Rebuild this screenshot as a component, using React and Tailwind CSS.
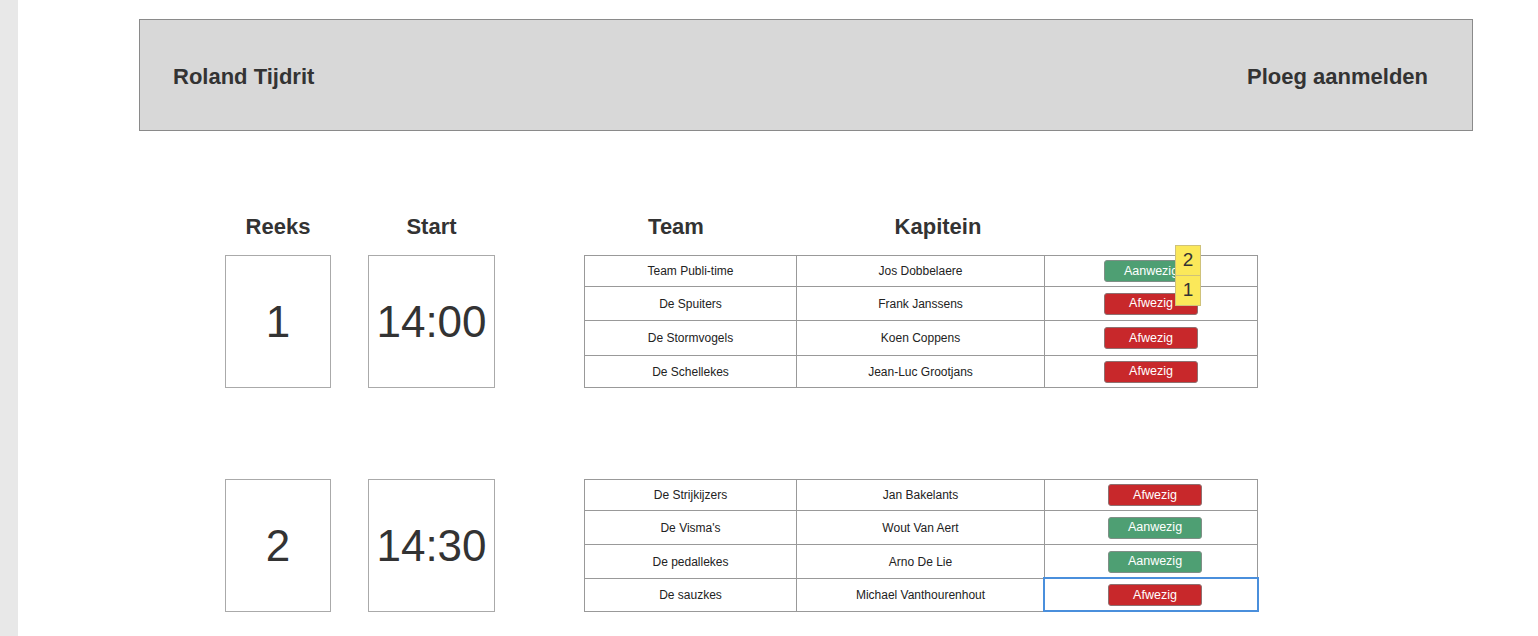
import React from 'react'

const groups = [
  {
    reeks: '1',
    start: '14:00',
    pad: 'pl-0',
    rows: [
      { team: 'Team Publi-time', kapitein: 'Jos Dobbelaere', aanwezig: true, h: 'h-[31px]' },
      { team: 'De Spuiters', kapitein: 'Frank Janssens', aanwezig: false, h: 'h-[34px]' },
      { team: 'De Stormvogels', kapitein: 'Koen Coppens', aanwezig: false, h: 'h-[35px]' },
      { team: 'De Schellekes', kapitein: 'Jean-Luc Grootjans', aanwezig: false, h: 'h-[32px]' },
    ],
  },
  {
    reeks: '2',
    start: '14:30',
    pad: 'pl-[8px]',
    rows: [
      { team: 'De Strijkijzers', kapitein: 'Jan Bakelants', aanwezig: false, h: 'h-[31px]' },
      { team: "De Visma's", kapitein: 'Wout Van Aert', aanwezig: true, h: 'h-[34px]' },
      { team: 'De pedallekes', kapitein: 'Arno De Lie', aanwezig: true, h: 'h-[34px]' },
      { team: 'De sauzkes', kapitein: 'Michael Vanthourenhout', aanwezig: false, h: 'h-[33px]', selected: true },
    ],
  },
]

function StatusButton({ aanwezig }) {
  return (
    <button
      className={
        'w-[94px] h-[22px] rounded-[3px] border text-[12.5px] leading-none text-white ' +
        (aanwezig ? 'bg-[#4e9f73] border-[#7f8f86]' : 'bg-[#c8282b] border-[#8f7070]')
      }
    >
      {aanwezig ? 'Aanwezig' : 'Afwezig'}
    </button>
  )
}

function Group({ group, first }) {
  return (
    <div className="flex items-start">
      <div className="w-[106px] h-[133px] border border-[#aaa] flex items-center justify-center text-[44px] text-[#333]">
        {group.reeks}
      </div>
      <div className="ml-[37px] w-[127px] h-[133px] border border-[#aaa] flex items-center justify-center text-[44px] text-[#333]">
        {group.start}
      </div>
      <div className="ml-[89px] relative">
        <table className="border-collapse border border-[#999] text-[12px] text-[#222]">
          <tbody>
            {group.rows.map((r, i) => (
              <tr key={i} className={r.h}>
                <td className="w-[212px] border border-[#999] text-center p-0">{r.team}</td>
                <td className="w-[248px] border border-[#999] text-center p-0">{r.kapitein}</td>
                <td className={'w-[213px] border border-[#999] text-center p-0 relative ' + group.pad}>
                  <StatusButton aanwezig={r.aanwezig} />
                  {r.selected && (
                    <div className="absolute -left-[2px] -right-[2px] -top-[2px] -bottom-[1px] border-[2.5px] border-[#4a8fdc] pointer-events-none" />
                  )}
                </td>
              </tr>
            ))}
          </tbody>
        </table>
        {first && (
          <>
            <div className="absolute left-[591px] top-[-10px] w-[26px] h-[31px] bg-[#fbe85a] border border-[#cfc27a] flex items-center justify-center text-[19px] text-[#333]">
              2
            </div>
            <div className="absolute left-[591px] top-[20px] w-[26px] h-[31px] bg-[#fbe85a] border border-[#cfc27a] flex items-center justify-center text-[19px] text-[#333]">
              1
            </div>
          </>
        )}
      </div>
    </div>
  )
}

export default function App() {
  return (
    <div className="flex min-h-[636px] bg-white" style={{ fontFamily: '"Liberation Sans", Arial, sans-serif' }}>
      <div className="w-[18px] bg-[#e8e8e8] shrink-0" />
      <div className="flex-1">
        <div className="mt-[19px] ml-[121px] w-[1334px] h-[112px] bg-[#d8d8d8] border border-[#8a8a8a] flex items-center justify-between pl-[33px] pr-[44px] pt-[2px]">
          <h1 className="text-[22px] font-bold text-[#333]">Roland Tijdrit</h1>
          <span className="text-[22px] font-bold text-[#333]">Ploeg aanmelden</span>
        </div>

        <div className="ml-[207px] mt-[83px]">
          <div className="flex h-[24px] items-center text-[22px] font-bold text-[#333] mb-[17px]">
            <div className="w-[106px] text-center">Reeks</div>
            <div className="ml-[37px] w-[127px] text-center">Start</div>
            <div className="ml-[89px] w-[184px] text-center">Team</div>
            <div className="ml-[20px] w-[300px] text-center">Kapitein</div>
          </div>
          <div className="flex flex-col gap-[91px]">
            {groups.map((g, i) => (
              <Group key={i} group={g} first={i === 0} />
            ))}
          </div>
        </div>
      </div>
    </div>
  )
}
